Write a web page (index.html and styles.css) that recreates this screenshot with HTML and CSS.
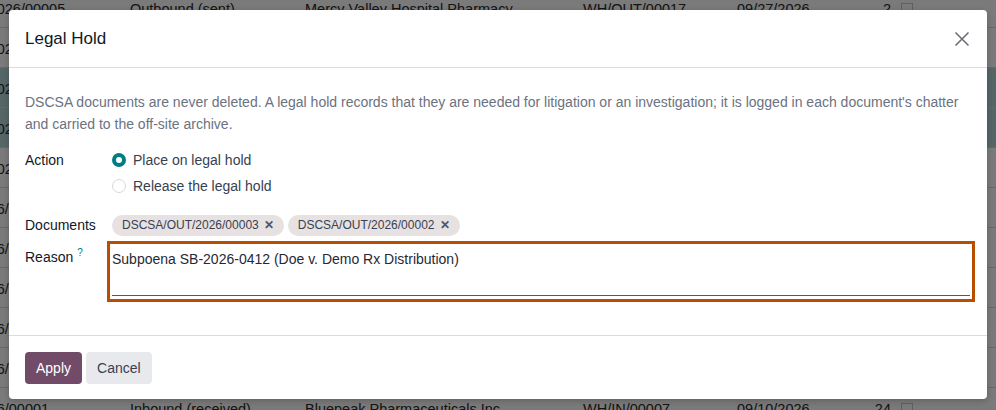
FILE: index.html
```html
<!DOCTYPE html>
<html>
<head>
<meta charset="utf-8">
<link rel="stylesheet" href="styles.css">
</head>
<body>
<div class="list">
  <div class="row"><span class="c1">DSCSA/OUT/2026/00005</span><span class="c2">Outbound (sent)</span><span class="c3">Mercy Valley Hospital Pharmacy</span><span class="c4">WH/OUT/00017</span><span class="c5">09/27/2026</span><span class="c6">2</span><span class="c7"><i class="chk"></i></span></div>
  <div class="row"><span class="c1">DSCSA/OUT/2026/00004</span><span class="c2">Outbound (sent)</span><span class="c3">Mercy Valley Hospital Pharmacy</span><span class="c4">WH/OUT/00016</span><span class="c5">09/25/2026</span><span class="c6">4</span><span class="c7"><i class="chk"></i></span></div>
  <div class="row sel"><span class="c1">DSCSA/OUT/2026/00003</span><span class="c2">Outbound (sent)</span><span class="c3">Mercy Valley Hospital Pharmacy</span><span class="c4">WH/OUT/00015</span><span class="c5">09/22/2026</span><span class="c6">6</span><span class="c7"><i class="chk"></i></span></div>
  <div class="row sel"><span class="c1">DSCSA/OUT/2026/00002</span><span class="c2">Outbound (sent)</span><span class="c3">Mercy Valley Hospital Pharmacy</span><span class="c4">WH/OUT/00014</span><span class="c5">09/20/2026</span><span class="c6">8</span><span class="c7"><i class="chk"></i></span></div>
  <div class="row"><span class="c1">DSCSA/OUT/2026/00001</span><span class="c2">Outbound (sent)</span><span class="c3">Mercy Valley Hospital Pharmacy</span><span class="c4">WH/OUT/00013</span><span class="c5">09/18/2026</span><span class="c6">3</span><span class="c7"><i class="chk"></i></span></div>
  <div class="row"><span class="c1">DSCSA/IN/2026/00006</span><span class="c2">Inbound (received)</span><span class="c3">Bluepeak Pharmaceuticals Inc.</span><span class="c4">WH/IN/00012</span><span class="c5">09/16/2026</span><span class="c6">12</span><span class="c7"><i class="chk"></i></span></div>
  <div class="row"><span class="c1">DSCSA/IN/2026/00005</span><span class="c2">Inbound (received)</span><span class="c3">Bluepeak Pharmaceuticals Inc.</span><span class="c4">WH/IN/00011</span><span class="c5">09/15/2026</span><span class="c6">18</span><span class="c7"><i class="chk"></i></span></div>
  <div class="row"><span class="c1">DSCSA/IN/2026/00004</span><span class="c2">Inbound (received)</span><span class="c3">Bluepeak Pharmaceuticals Inc.</span><span class="c4">WH/IN/00010</span><span class="c5">09/14/2026</span><span class="c6">20</span><span class="c7"><i class="chk"></i></span></div>
  <div class="row"><span class="c1">DSCSA/IN/2026/00003</span><span class="c2">Inbound (received)</span><span class="c3">Bluepeak Pharmaceuticals Inc.</span><span class="c4">WH/IN/00009</span><span class="c5">09/12/2026</span><span class="c6">16</span><span class="c7"><i class="chk"></i></span></div>
  <div class="row"><span class="c1">DSCSA/IN/2026/00002</span><span class="c2">Inbound (received)</span><span class="c3">Bluepeak Pharmaceuticals Inc.</span><span class="c4">WH/IN/00008</span><span class="c5">09/11/2026</span><span class="c6">10</span><span class="c7"><i class="chk"></i></span></div>
  <div class="row"><span class="c1">DSCSA/IN/2026/00001</span><span class="c2">Inbound (received)</span><span class="c3">Bluepeak Pharmaceuticals Inc.</span><span class="c4">WH/IN/00007</span><span class="c5">09/10/2026</span><span class="c6">24</span><span class="c7"><i class="chk"></i></span></div>
</div>
<div class="backdrop"></div>
<div class="modal">
  <header class="modal-header">
    <h4 class="modal-title">Legal Hold</h4>
    <button class="close" aria-label="Close">
      <svg width="16" height="16" viewBox="0 0 16 16"><path d="M1.5 1.5 L14.5 14.5 M14.5 1.5 L1.5 14.5" stroke="#6b6f76" stroke-width="1.6" fill="none"/></svg>
    </button>
  </header>
  <main class="modal-body">
    <p class="desc">DSCSA documents are never deleted. A legal hold records that they are needed for litigation or an investigation; it is logged in each document's chatter and carried to the off-site archive.</p>
    <div class="field field-action">
      <div class="label">Action</div>
      <div class="value radios">
        <label class="radio"><span class="dot on"></span>Place on legal hold</label>
        <label class="radio"><span class="dot"></span>Release the legal hold</label>
      </div>
    </div>
    <div class="field field-docs">
      <div class="label">Documents</div>
      <div class="value tags">
        <span class="tag">DSCSA/OUT/2026/00003<span class="x">✕</span></span>
        <span class="tag">DSCSA/OUT/2026/00002<span class="x">✕</span></span>
      </div>
    </div>
    <div class="field field-reason">
      <div class="label label-reason">Reason <sup class="help">?</sup></div>
      <div class="value outline">
        <div class="textarea">Subpoena SB-2026-0412 (Doe v. Demo Rx Distribution)</div>
      </div>
    </div>
  </main>
  <footer class="modal-footer">
    <button class="btn btn-primary">Apply</button>
    <button class="btn btn-secondary">Cancel</button>
  </footer>
</div>
</body>
</html>
```

FILE: styles.css
```css
* { box-sizing: border-box; }
html, body { margin: 0; padding: 0; }
body {
  width: 996px;
  height: 410px;
  overflow: hidden;
  position: relative;
  font-family: "Liberation Sans", Arial, sans-serif;
  font-size: 14px;
  color: #1f2937;
  background: #ffffff;
}

/* background list */
.list {
  margin-top: -12px;
  display: flex;
  flex-direction: column;
}
.row {
  height: 40px;
  display: flex;
  align-items: center;
  border-bottom: 1px solid #d8d8d8;
  font-size: 14.5px;
  color: #2a2a2a;
  background: #ffffff;
  padding-top: 2px;
}
.row.sel { background: #b4d6d6; }
.row span { white-space: nowrap; overflow: visible; flex: none; }
.c1 { width: 230px; margin-left: -100px; }
.c2 { width: 175px; }
.c3 { width: 278px; }
.c4 { width: 154px; }
.c5 { width: 137px; }
.c6 { width: 17px; text-align: right; }
.c7 { width: 40px; padding-left: 10px; }
.chk { display: block; width: 12px; height: 12px; border: 1px solid #c8c8c8; background: #fff; }

.backdrop {
  position: absolute;
  inset: 0;
  background: rgba(0, 0, 0, 0.52);
}

/* modal */
.modal {
  position: absolute;
  left: 9px;
  top: 10px;
  width: 978px;
  height: 389px;
  background: #ffffff;
  border-radius: 4px;
  display: flex;
  flex-direction: column;
  box-shadow: 0 2px 6px rgba(0,0,0,0.2);
}
.modal-header {
  height: 58px;
  display: flex;
  align-items: center;
  justify-content: space-between;
  padding: 0 16px;
  border-bottom: 1px solid #dcdcdc;
  flex: none;
}
.modal-title {
  margin: 0;
  font-size: 17px;
  font-weight: 400;
  color: #111827;
}
.close {
  border: none;
  background: none;
  padding: 0;
  margin-right: 1px;
  width: 16px;
  height: 16px;
  display: flex;
}

.modal-body {
  flex: 1;
  padding: 16px 16px 0 16px;
}
.desc {
  margin: 7px 0 14px 0;
  line-height: 22px;
  color: #6b7280;
}
.field {
  display: flex;
  line-height: 22px;
}
.label {
  width: 87px;
  flex: none;
  color: #111827;
}
.label-reason { padding-top: 5px; }
.value { flex: 1; }
.radios { display: flex; flex-direction: column; gap: 4px; }
.radio {
  display: flex;
  align-items: center;
  gap: 7px;
  color: #374151;
}
.dot {
  width: 14px;
  height: 14px;
  border-radius: 50%;
  border: 1px solid #d6d8da;
  background: #fff;
  flex: none;
}
.dot.on { border: 4px solid #017e84; }

.field-docs { margin-top: 17px; }
.tags { display: flex; gap: 4px; align-items: center; }
.tag {
  display: inline-flex;
  align-items: center;
  height: 21px;
  padding: 0 10px;
  border-radius: 11px;
  background: #e7e1e1;
  font-size: 12px;
  color: #374151;
}
.tag .x { margin-left: 5px; font-size: 12px; font-weight: 700; color: #4b5563; }

.field-reason { margin-top: 5px; }
.help { color: #017e84; font-size: 10px; vertical-align: top; position: relative; top: -4px; }
.outline {
  margin-left: -5px;
  margin-right: -4px;
  border: 3px solid #b94d00;
  height: 61px;
  padding: 0 2px 3px 2px;
  display: flex;
}
.textarea {
  flex: 1;
  border-bottom: 1px solid #017e84;
  padding: 4px 0 0 0;
  line-height: 22px;
  color: #1f2937;
}

.modal-footer {
  flex: none;
  border-top: 1px solid #dcdcdc;
  padding: 16px 16px 15px 16px;
  display: flex;
  gap: 4px;
}
.btn {
  height: 32px;
  border: none;
  border-radius: 4px;
  font-family: "Liberation Sans", Arial, sans-serif;
  font-size: 14px;
  padding: 0 11px;
}
.btn-primary { background: #714b67; color: #ffffff; }
.btn-secondary { background: #e7e9ed; color: #374151; }
```
